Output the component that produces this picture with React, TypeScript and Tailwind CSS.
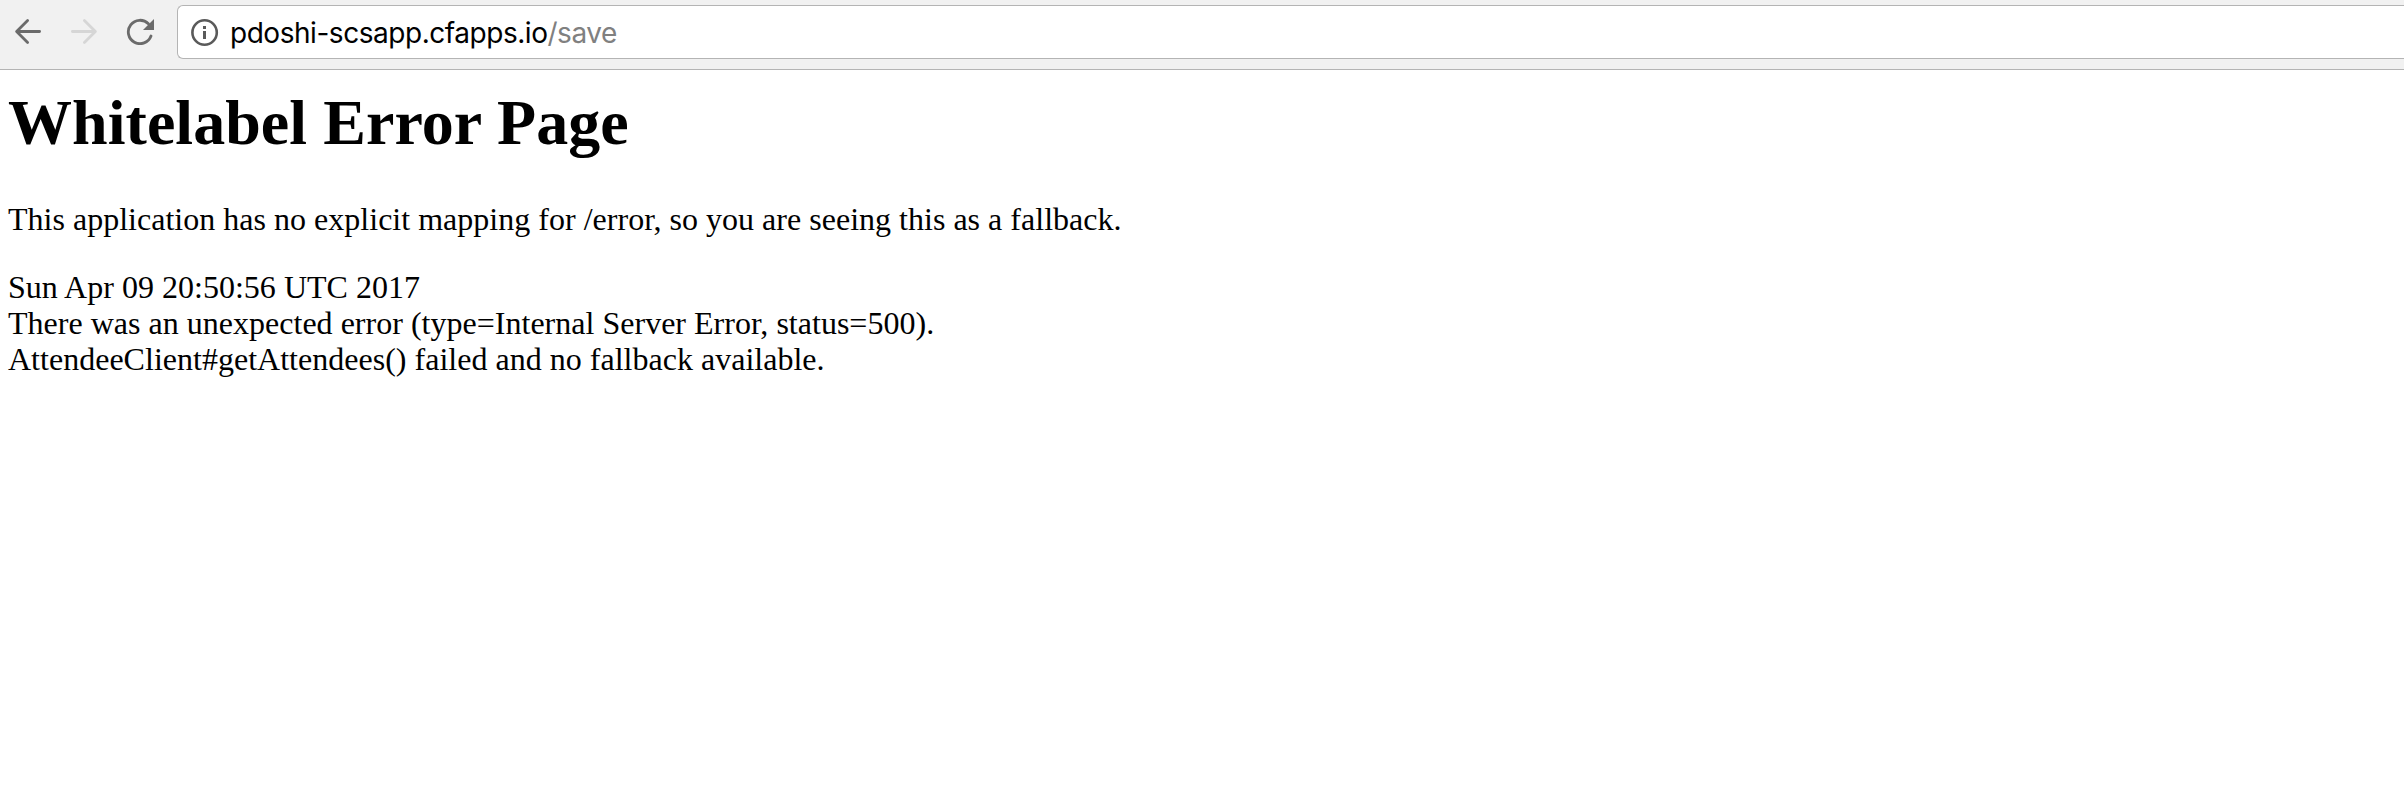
function BackIcon() {
  return (
    <svg width="28" height="28" viewBox="0 0 28 28" fill="none" stroke="#6b6b6b" strokeWidth="2.8" strokeLinecap="round" strokeLinejoin="round">
      <path d="M25.6 14.5H3M13.6 3.5L2.6 14.5L13.6 25.5" />
    </svg>
  );
}

function ForwardIcon() {
  return (
    <svg width="28" height="28" viewBox="0 0 28 28" fill="none" stroke="#d6d6d6" strokeWidth="2.8" strokeLinecap="round" strokeLinejoin="round">
      <path d="M2.4 14.5H25M14.4 3.5L25.4 14.5L14.4 25.5" />
    </svg>
  );
}

function ReloadIcon() {
  return (
    <svg width="30" height="28" viewBox="0 0 30 28" fill="none">
      <path d="M25 19A11.7 11.7 0 1 1 22.4 6.8" stroke="#6b6b6b" strokeWidth="2.8" strokeLinecap="round" />
      <path d="M28 2V13H17Z" fill="#6b6b6b" />
    </svg>
  );
}

function InfoIcon() {
  return (
    <svg width="28" height="28" viewBox="0 0 28 28" fill="none">
      <circle cx="13.6" cy="14.5" r="12.2" stroke="#5a5a5a" strokeWidth="2.6" />
      <path d="M12 8h3v3h-3zM12 13h3v8h-3z" fill="#5a5a5a" />
    </svg>
  );
}

export default function App() {
  return (
    <div className="h-[796px] w-full overflow-hidden bg-white text-black">
      <header className="flex h-[70px] items-start border-b border-[#b4b4b4] bg-[#f1f1f1] pl-[14px]">
        <div className="flex pt-[17px]">
          <BackIcon />
          <div className="ml-[28px] flex"><ForwardIcon /></div>
          <div className="ml-[28px] flex"><ReloadIcon /></div>
        </div>
        <div className="mt-[5px] ml-[21px] flex h-[54px] flex-1 items-center rounded-l-[6px] border border-r-0 border-[#b4b4b4] bg-white pl-[13px]">
          <InfoIcon />
          <span className="ml-[11px] pt-[2px] font-['Inter',sans-serif] text-[28px] leading-[34px] tracking-[-0.46px] whitespace-nowrap">
            pdoshi-scsapp.cfapps.io<span className="text-[#808080]">/save</span>
          </span>
        </div>
      </header>
      <main className="px-2 pt-[16px] font-['Liberation_Serif',serif] text-[32px] leading-[36px] tracking-[0.015px]">
        <h1 className="text-[64px] leading-[74px] font-bold tracking-[0.05px]">Whitelabel Error Page</h1>
        <p className="mt-[41px]">
          This application has no explicit mapping for /error, so you are seeing this as a fallback.
        </p>
        <div className="mt-8">Sun Apr 09 20:50:56 UTC 2017</div>
        <div>There was an unexpected error (type=Internal Server Error, status=500).</div>
        <div>AttendeeClient#getAttendees() failed and no fallback available.</div>
      </main>
    </div>
  );
}
